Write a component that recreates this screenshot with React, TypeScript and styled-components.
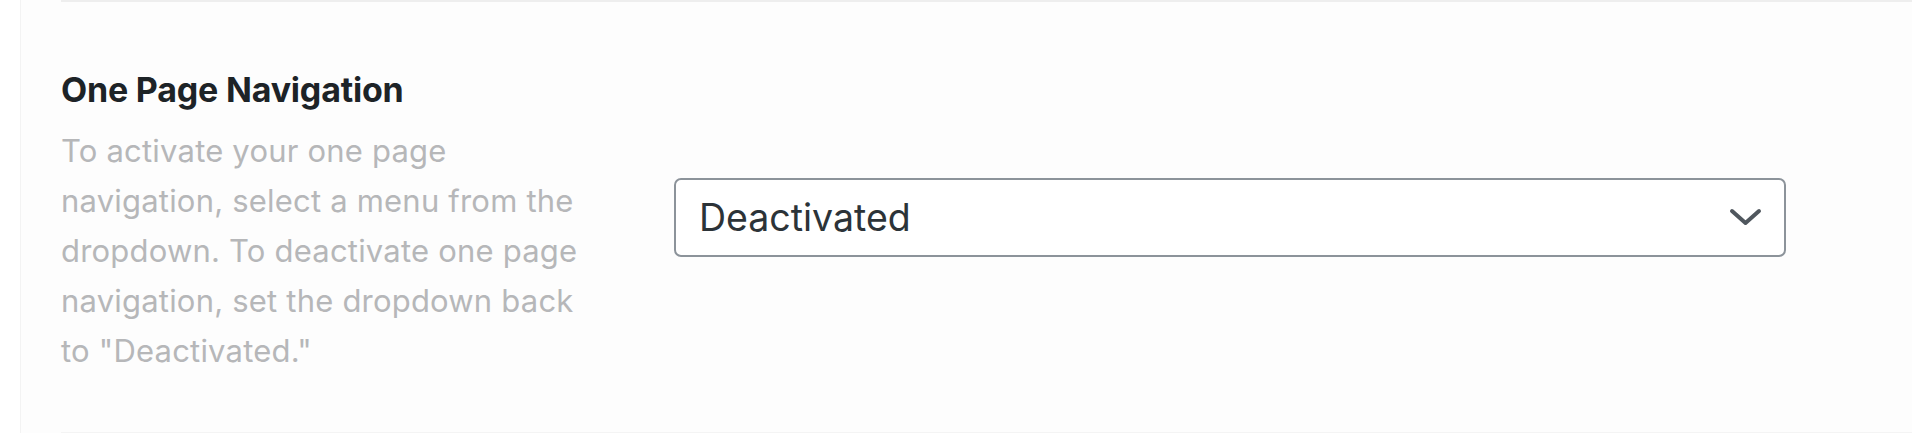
import React from 'react';
import styled, {createGlobalStyle} from 'styled-components';

const GlobalStyle = createGlobalStyle`
    html, body {
        margin: 0;
        padding: 0;
        background: #ffffff;
    }
    body {
        font-family: Inter, "Noto Sans", "Liberation Sans", sans-serif;
    }
`;

const Page = styled.div`
    box-sizing: border-box;
    height: 433px;
    padding-left: 20px;
    background: #ffffff;
`;

const Panel = styled.div`
    box-sizing: border-box;
    height: 100%;
    padding: 0 0 0 40px;
    background: #fdfdfd;
    border-left: 1px solid #f3f3f3;
`;

const SettingRow = styled.div`
    box-sizing: border-box;
    height: 100%;
    display: flex;
    align-items: center;
    border-top: 2px solid #eeeeee;
    border-bottom: 1px solid #f4f4f4;
    padding-top: 12px;
`;

const LabelColumn = styled.div`
    box-sizing: border-box;
    width: 613px;
    padding-right: 63px;
    flex-shrink: 0;
    display: flex;
    flex-direction: column;
    gap: 16px;
`;

const Title = styled.h3`
    margin: 0;
    font-size: 34px;
    line-height: 40px;
    font-weight: 700;
    letter-spacing: -0.2px;
    color: #1d2327;
`;

const Description = styled.p`
    margin: 0;
    font-size: 31px;
    line-height: 50px;
    font-weight: 400;
    letter-spacing: 0.2px;
    color: #b6b7b9;
`;

const SelectWrapper = styled.div`
    box-sizing: border-box;
    width: 1112px;
    height: 79px;
    margin-top: -12px;
    display: flex;
    align-items: center;
    justify-content: space-between;
    padding: 0 22px 0 23px;
    background: #ffffff;
    border: 2px solid #8c939a;
    border-radius: 7px;
    cursor: pointer;
`;

const SelectValue = styled.span`
    font-size: 37.5px;
    color: #2c3338;
`;

const Chevron = () => (
    <svg width="33" height="18" viewBox="0 0 33 18" fill="none">
        <path d="M3 3L16.5 15L30 3" stroke="#50575e" strokeWidth="4" strokeLinecap="round" strokeLinejoin="round"/>
    </svg>
);

export default function App() {
    return (
        <>
            <GlobalStyle/>
            <Page>
                <Panel>
                    <SettingRow>
                        <LabelColumn>
                            <Title>One Page Navigation</Title>
                            <Description>
                                To activate your one page navigation, select a menu from the dropdown. To deactivate one page navigation, set the dropdown back to "Deactivated."
                            </Description>
                        </LabelColumn>
                        <SelectWrapper>
                            <SelectValue>Deactivated</SelectValue>
                            <Chevron/>
                        </SelectWrapper>
                    </SettingRow>
                </Panel>
            </Page>
        </>
    );
}
